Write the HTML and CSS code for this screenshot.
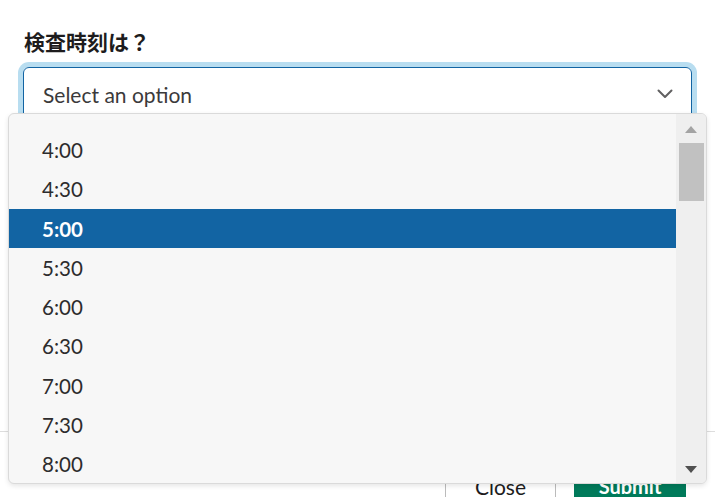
FILE: index.html
```html
<!DOCTYPE html>
<html lang="ja">
<head>
<meta charset="utf-8">
<title>検査時刻</title>
<link rel="stylesheet" href="styles.css">
</head>
<body>
<div class="modal">
  <div class="content">
    <div class="label">検査時刻は？</div>
    <div class="select">
      <span class="placeholder">Select an option</span>
      <svg class="chevron" width="16" height="10" viewBox="0 0 16 10"><path d="M1.5 1.5 L8 8 L14.5 1.5" fill="none" stroke="#616061" stroke-width="2" stroke-linecap="round" stroke-linejoin="round"/></svg>
    </div>
  </div>
  <div class="footer">
    <button class="btn btn-close">Close</button>
    <button class="btn btn-submit">Submit</button>
  </div>
  <div class="menu">
    <ul class="options">
      <li class="option">4:00</li>
      <li class="option">4:30</li>
      <li class="option selected">5:00</li>
      <li class="option">5:30</li>
      <li class="option">6:00</li>
      <li class="option">6:30</li>
      <li class="option">7:00</li>
      <li class="option">7:30</li>
      <li class="option">8:00</li>
      <li class="option">8:30</li>
    </ul>
    <div class="scrollbar">
      <div class="arrow arrow-up"></div>
      <div class="thumb"></div>
      <div class="track"></div>
      <div class="arrow arrow-down"></div>
    </div>
  </div>
</div>
</body>
</html>
```

FILE: styles.css
```css
* { box-sizing: border-box; }
html, body { margin: 0; padding: 0; background: #fff; }
body { font-family: Lato, "Noto Sans CJK JP", sans-serif; color: #1d1c1d; }

.modal {
  position: relative;
  height: 497px;
  display: flex;
  flex-direction: column;
  overflow: hidden;
}

.content {
  flex: 1;
  padding: 28px 23px 0 23px;
}

.label {
  font-family: "Noto Sans CJK JP", sans-serif;
  font-weight: 700;
  font-size: 21px;
  line-height: 27px;
  padding-left: 1px;
  color: #1d1c1d;
}

.select {
  margin-top: 12px;
  height: 54px;
  border: 1px solid #1264a3;
  border-radius: 6px;
  box-shadow: 0 0 0 5px #b8ddf0;
  display: flex;
  align-items: center;
  justify-content: space-between;
  padding: 0 18px 0 19px;
}

.placeholder {
  font-size: 21px;
  color: #3b3a3b;
}

.chevron { display: block; margin-top: -1px; }

.footer {
  height: 66px;
  border-top: 1px solid #dddddd;
  display: flex;
  justify-content: flex-end;
  gap: 18px;
  padding: 29px 29px 0 0;
}

.btn {
  height: 50px;
  width: 111px;
  font-family: Lato, sans-serif;
  font-weight: 700;
  font-size: 20px;
  border-radius: 6px;
  padding: 0;
}

.btn-close {
  background: #fff;
  color: #1d1c1d;
  font-weight: 400;
  font-size: 21px;
  border: 1px solid #bbbbbb;
}

.btn-submit {
  width: 112px;
  background: #007a5a;
  color: #fff;
  border: none;
}

.menu {
  position: absolute;
  left: 8px;
  top: 113px;
  width: 699px;
  height: 371px;
  background: #f7f7f7;
  border: 1px solid #dadada;
  border-radius: 6px;
  box-shadow: 0 2px 5px rgba(0, 0, 0, 0.1);
  display: flex;
  overflow: hidden;
}

.options {
  flex: 1;
  list-style: none;
  margin: 0;
  padding: 16px 0 0 0;
  overflow: hidden;
}

.option {
  height: 39.3px;
  line-height: 41px;
  padding-left: 33px;
  font-size: 20.5px;
  color: #2d2c2d;
}

.option.selected {
  background: #1264a3;
  color: #fff;
  font-weight: 700;
}

.scrollbar {
  width: 30px;
  background: #efefef;
  display: flex;
  flex-direction: column;
  align-items: center;
  padding: 12px 0 10px 0;
}

.arrow {
  width: 0;
  height: 0;
  border-left: 6.5px solid transparent;
  border-right: 6.5px solid transparent;
}

.arrow-up { border-bottom: 7px solid #a3a3a3; }
.arrow-down { border-top: 7px solid #505050; }

.thumb {
  margin-top: 10px;
  width: 25px;
  height: 58px;
  background: #c1c1c1;
}

.track { flex: 1; }
```
